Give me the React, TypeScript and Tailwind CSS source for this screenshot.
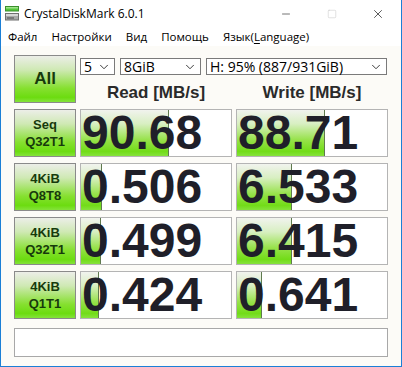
import { ChevronDown, Minus, Square, X } from 'lucide-react';

type Row = {
  label: [string, string];
  read: string;
  write: string;
  readBar: number;
  writeBar: number;
};

const rows: Row[] = [
  { label: ['Seq', 'Q32T1'], read: '90.68', write: '88.71', readBar: 88, writeBar: 88 },
  { label: ['4KiB', 'Q8T8'], read: '0.506', write: '6.533', readBar: 21, writeBar: 55 },
  { label: ['4KiB', 'Q32T1'], read: '0.499', write: '6.415', readBar: 20, writeBar: 55 },
  { label: ['4KiB', 'Q1T1'], read: '0.424', write: '0.641', readBar: 18, writeBar: 25 },
];

const greenButton =
  'border border-[#8a8a8a] bg-[linear-gradient(to_bottom,#eceee8_0%,#cfe9b4_30%,#86e030_70%,#6cdc10_90%,#84e33a_100%)] text-[#173a0c] font-bold font-["Liberation_Sans",Arial,sans-serif]';

function AppIcon() {
  return (
    <svg width="14" height="15" viewBox="0 0 14 15">
      <rect x="0.5" y="0.5" width="13" height="4.5" fill="#55c53a" stroke="#3b8f2c" />
      <rect x="1" y="1" width="12" height="1.5" fill="#9ee38a" />
      <rect x="0.5" y="7.5" width="13" height="6.5" fill="#a9a9a9" stroke="#6f6f6f" />
      <rect x="1" y="8" width="12" height="2" fill="#d6d6d6" />
      <rect x="2" y="11.5" width="7" height="1" fill="#4a4a4a" />
    </svg>
  );
}

function Select({ value, width }: { value: string; width: string }) {
  return (
    <div
      className={`${width} flex h-[17px] items-center justify-between border border-[#7a7a7a] bg-white pl-[3px] pr-[3px] text-[14px] leading-none text-black`}
    >
      <span>{value}</span>
      <ChevronDown size={14} strokeWidth={1.5} className="text-[#222]" />
    </div>
  );
}

function ValueCell({ value, bar }: { value: string; bar: number }) {
  return (
    <div className="relative flex h-[48px] w-[152px] items-center border border-[#b4b4b4] bg-white">
      <div
        className="absolute inset-y-0 left-0 border-r border-[#5f7a4e] bg-[linear-gradient(to_bottom,#f1f3ee_0%,#d8efc2_30%,#97e24a_65%,#72dc18_90%,#86e23c_100%)]"
        style={{ width: bar }}
      />
      <span className='relative pl-[1px] font-["Liberation_Sans",Arial,sans-serif] text-[48px] leading-none font-bold text-[#1f1f29]'>
        {value}
      </span>
    </div>
  );
}

export default function App() {
  return (
    <div className='flex h-[367px] w-[402px] flex-col border-x border-b border-[#1b7fd6] bg-white font-["Open_Sans","Noto_Sans",sans-serif] text-black'>
      <div className="flex h-[27px] shrink-0 items-center">
        <div className="ml-[4px] flex items-center">
          <AppIcon />
        </div>
        <span className="ml-[5px] text-[12px]">CrystalDiskMark 6.0.1</span>
        <div className="ml-auto flex items-center">
          <div className="flex w-[46px] justify-center">
            <Minus size={12} strokeWidth={1.1} />
          </div>
          <div className="flex w-[46px] justify-center">
            <Square size={10} strokeWidth={1.2} className="text-[#c4c4c4]" />
          </div>
          <div className="flex w-[46px] justify-center">
            <X size={14} strokeWidth={1.1} />
          </div>
        </div>
      </div>

      <div className="flex h-[19px] shrink-0 items-center gap-[14px] pl-[7px] text-[11.5px]">
        <span>Файл</span>
        <span>Настройки</span>
        <span>Вид</span>
        <span>Помощь</span>
        <span>
          Язык(<span className="underline underline-offset-2">L</span>anguage)
        </span>
      </div>

      <div className="flex flex-1 flex-col bg-[#fcfbf7] pl-[13px]">
        <div className="mt-[9px] flex gap-[4px]">
          <div className={`${greenButton} flex h-[48px] w-[62px] items-center justify-center text-[17px]`}>
            All
          </div>
          <div className="flex w-[308px] flex-col">
            <div className="mt-[3px] flex gap-[5px]">
              <Select value="5" width="w-[35px]" />
              <Select value="8GiB" width="w-[81px]" />
              <Select value="H: 95% (887/931GiB)" width="w-[181px]" />
            </div>
            <div className='mt-[7px] flex gap-[4px] font-["Liberation_Sans",Arial,sans-serif] text-[17px] leading-[22px] font-bold text-[#2a2a2a]'>
              <div className="w-[152px] text-center">Read [MB/s]</div>
              <div className="w-[152px] text-center">Write [MB/s]</div>
            </div>
          </div>
        </div>

        <div className="mt-[5px] flex flex-col gap-[6px]">
          {rows.map((row) => (
            <div key={row.label.join(' ') + row.read} className="flex gap-[4px]">
              <div
                className={`${greenButton} flex h-[48px] w-[62px] flex-col items-center justify-center text-[13px] leading-[17px]`}
              >
                <span>{row.label[0]}</span>
                <span>{row.label[1]}</span>
              </div>
              <ValueCell value={row.read} bar={row.readBar} />
              <ValueCell value={row.write} bar={row.writeBar} />
            </div>
          ))}
        </div>

        <div className="mt-[9px] h-[29px] w-[374px] border border-[#a8a8a8] bg-white" />
      </div>
    </div>
  );
}
